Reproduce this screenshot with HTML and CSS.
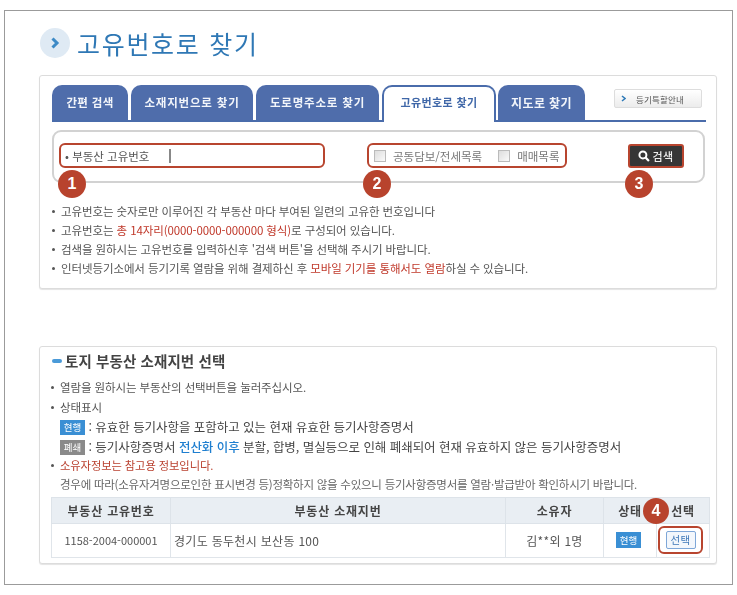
FILE: index.html
```html
<!DOCTYPE html>
<html lang="ko">
<head>
<meta charset="utf-8">
<title>고유번호로 찾기</title>
<link rel="stylesheet" href="styles.css">
</head>
<body>
<main class="frame">
  <header class="page-head">
    <span class="head-icon"><svg width="14" height="14" viewBox="0 0 14 14"><path d="M4.5 2.5 L9 7 L4.5 11.5" fill="none" stroke="#3d8ac6" stroke-width="3"/></svg></span>
    <h1 class="page-title">고유번호로 찾기</h1>
  </header>

  <section class="panel panel-search">
    <div class="tabs">
      <a class="tab tab-a">간편 검색</a>
      <a class="tab tab-b">소재지번으로 찾기</a>
      <a class="tab tab-c">도로명주소로 찾기</a>
      <a class="tab tab-d active">고유번호로 찾기</a>
      <a class="tab tab-e">지도로 찾기</a>
      <a class="guide"><svg width="5" height="7" viewBox="0 0 5 7"><path d="M1 1 L4 3.5 L1 6" fill="none" stroke="#2f7ab8" stroke-width="1.5"/></svg>등기특할안내</a>
    </div>
    <div class="search-box">
      <div class="mark mark-input">
        <span class="field-label">• 부동산 고유번호</span>
        <span class="caret"></span>
      </div>
      <div class="mark mark-checks">
        <span class="check"></span><span class="check-label">공동담보/전세목록</span>
        <span class="check check-2"></span><span class="check-label">매매목록</span>
      </div>
      <button class="search-btn"><svg width="12" height="12" viewBox="0 0 11 11"><circle cx="4.5" cy="4.5" r="3.2" fill="none" stroke="#fff" stroke-width="1.8"/><path d="M7 7 L10 10" stroke="#fff" stroke-width="2"/></svg>검색</button>
      <span class="num num-1">1</span>
      <span class="num num-2">2</span>
      <span class="num num-3">3</span>
    </div>
    <ul class="notes">
      <li>고유번호는 숫자로만 이루어진 각 부동산 마다 부여된 일련의 고유한 번호입니다</li>
      <li>고유번호는 <em class="red">총 14자리(0000-0000-000000 형식)</em>로 구성되어 있습니다.</li>
      <li>검색을 원하시는 고유번호를 입력하신후 '검색 버튼'을 선택해 주시기 바랍니다.</li>
      <li>인터넷등기소에서 등기기록 열람을 위해 결제하신 후 <em class="red">모바일 기기를 통해서도 열람</em>하실 수 있습니다.</li>
    </ul>
  </section>

  <section class="panel panel-result">
    <h2 class="result-title"><span class="dash"></span>토지 부동산 소재지번 선택</h2>
    <ul class="notes notes-result">
      <li>열람을 원하시는 부동산의 선택버튼을 눌러주십시오.</li>
      <li>상태표시</li>
      <li class="state"><span class="tag tag-blue">현행</span> : 유효한 등기사항을 포함하고 있는 현재 유효한 등기사항증명서</li>
      <li class="state"><span class="tag tag-gray">폐쇄</span> : 등기사항증명서 <em class="blue">전산화 이후</em> 분할, 합병, 멸실등으로 인해 폐쇄되어 현재 유효하지 않은 등기사항증명서</li>
      <li class="owner">소유자정보는 참고용 정보입니다.</li>
      <li class="plain">경우에 따라(소유자겨명으로인한 표시변경 등)정확하지 않을 수있으니 등기사항증명서를 열람·발급받아 확인하시기 바랍니다.</li>
    </ul>
    <table class="result-table">
      <colgroup><col class="c1"><col class="c2"><col class="c3"><col class="c4"><col class="c5"></colgroup>
      <thead>
        <tr><th>부동산 고유번호</th><th>부동산 소재지번</th><th>소유자</th><th>상태</th><th class="th-pick">선택<span class="num num-4">4</span></th></tr>
      </thead>
      <tbody>
        <tr>
          <td class="center cell-id">1158-2004-000001</td>
          <td>경기도 동두천시 보산동 100</td>
          <td class="center">김**외 1명</td>
          <td class="center"><span class="tag tag-blue tag-cell">현행</span></td>
          <td class="center"><span class="pick-mark"><span class="pick-btn">선택</span></span></td>
        </tr>
      </tbody>
    </table>
  </section>
</main>
</body>
</html>
```
FILE: styles.css
```css
* { box-sizing: border-box; }
html, body { margin: 0; background: #fff; }
body { font-family: "Noto Sans CJK KR", "Noto Sans", sans-serif; color: #555; }

.frame {
  width: 729px;
  height: 575px;
  margin: 10px 0 0 4px;
  padding: 17px 14px 0 34px;
  border: 1px solid #9b9b9b;
}
.frame > * { filter: blur(0.55px); }

.page-head { display: flex; align-items: center; gap: 7px; height: 30px; margin-left: 1px; }
.head-icon {
  width: 30px; height: 30px; border-radius: 50%;
  background: #dfeaf4;
  display: flex; align-items: center; justify-content: center;
}
.page-title { margin: 0; font-size: 25px; font-weight: 400; color: #2f78b5; letter-spacing: 1.7px; line-height: 30px; }

.panel { border: 1px solid #dcdcdc; border-radius: 3px; width: 678px; background: #fff; box-shadow: 0 1px 1px #e4e4e4; }
.panel-search { height: 214px; margin-top: 17px; padding: 9px 10px 0 12px; }
.panel-result { height: 218px; margin-top: 57px; padding: 4px 7px 0 11px; }

.tabs { display: flex; gap: 3px; height: 37px; width: 654px; border-bottom: 2px solid #4a6cab; position: relative; }
.tab {
  height: 35px; border-radius: 10px 10px 0 0; background: #4f6dab; color: #f2f5fa;
  font-size: 11.5px; font-weight: 700; text-align: center; line-height: 35px; letter-spacing: .8px; display: block;
}
.tab-a { width: 76px; letter-spacing: .3px; }
.tab-b { width: 122px; }
.tab-c { width: 123px; }
.tab-d { width: 114px; }
.tab-e { width: 87px; margin-left: -1px; font-size: 12px; letter-spacing: .4px; }
.tab.active {
  height: 37px; background: #fff; color: #3f67a8; border: 2px solid #4a6cab; border-bottom: 0;
  font-size: 11px; line-height: 31px; letter-spacing: .4px;
}
.guide {
  display: flex; align-items: center; gap: 10px;
  position: absolute; left: 562px; top: 4px; width: 88px; height: 19px; padding-left: 6px;
  border: 1px solid #ddd; border-radius: 2px; font-size: 8.5px; letter-spacing: .2px; color: #555;
  background: linear-gradient(#fff, #ececec);
}

.search-box {
  position: relative; display: flex; align-items: center;
  width: 653px; height: 53px; margin-top: 8px; padding: 0 0 2px 5px;
  border: 2px solid #d2d2d2; border-radius: 9px;
}
.mark { display: flex; align-items: center; height: 25px; border: 2.5px solid #b8452f; border-radius: 6px; }
.mark-input { width: 266px; padding-left: 4px; }
.field-label { font-size: 11.5px; color: #555; width: 104px; white-space: nowrap; }
.caret { width: 2px; height: 14px; background: #888; }
.mark-checks { width: 200px; margin-left: 42px; padding-left: 5px; }
.check { width: 12px; height: 12px; border: 1px solid #bbb; background: linear-gradient(135deg, #ddd, #fafafa); }
.check-2 { margin-left: 16px; }
.check-label { font-size: 11.5px; color: #777; margin-left: 7px; white-space: nowrap; }
.search-btn {
  display: flex; align-items: center; justify-content: center; gap: 2px;
  width: 56px; height: 24px; margin-left: 61px; padding: 0;
  background: #363636; color: #eee; border: 2px solid #b8452f; border-radius: 3px;
  font: 500 11px "Noto Sans CJK KR", sans-serif; letter-spacing: .5px;
}
.num {
  position: absolute; width: 28px; height: 28px; border-radius: 50%;
  background: #b8432d; color: #fff;
  font: 700 16px/28px "Liberation Sans", sans-serif; text-align: center; letter-spacing: 0;
}
.num-1 { left: 4px; top: 38px; }
.num-2 { left: 309px; top: 38px; }
.num-3 { left: 571px; top: 38px; }
.num-4 { left: -14px; top: 0; width: 26px; height: 26px; line-height: 26px; }

.notes { list-style: none; margin: 19px 0 0; padding: 0; font-size: 11.5px; line-height: 19px; letter-spacing: -.1px; }
.notes li { position: relative; padding-left: 9px; white-space: nowrap; color: #555; }
.notes li::before { content: ""; position: absolute; left: 0; top: 8px; width: 3px; height: 3px; border-radius: 50%; background: #555; }
.notes li.state::before, .notes li.plain::before { display: none; }
.red { font-style: normal; color: #c0392b; }
.blue { font-style: normal; color: #1f7fd0; font-weight: 500; }

.result-title { margin: 0; height: 20px; font-size: 14.5px; line-height: 20px; font-weight: 700; color: #444; display: flex; align-items: center; gap: 3px; letter-spacing: .1px; }
.dash { width: 10px; height: 4px; border-radius: 2px; background: #4a9ad8; margin-left: 1px; }
.notes-result { margin-top: 7px; }
.notes-result li { line-height: 19.5px; }
.notes li.state { font-size: 12.5px; color: #444; letter-spacing: -.05px; }
.notes li.owner { color: #b9402f; font-size: 11.3px; }
.notes li.plain { color: #666; letter-spacing: -.25px; line-height: 17px; }
.tag { display: inline-block; width: 25px; height: 15px; line-height: 15px; text-align: center; color: #fff; font-size: 9.5px; letter-spacing: 0; vertical-align: 1px; }
.tag-blue { background: #3a8fd4; }
.tag-gray { background: #8a8a8a; }
.tag-cell { height: 16px; line-height: 16px; margin-left: -3px; vertical-align: 2px; }

.result-table { border-collapse: collapse; table-layout: fixed; width: 658px; margin-top: 4px; font-size: 12px; color: #555; }
.c1 { width: 119px; } .c2 { width: 335px; } .c3 { width: 98px; } .c4 { width: 53px; } .c5 { width: 53px; }
.result-table th {
  height: 26px; padding: 0; background: #e9eef3; border: 1px solid #dde3e9;
  font-size: 12px; font-weight: 700; color: #444; letter-spacing: .8px;
}
.result-table td { height: 34px; padding: 0 3px; border: 1px solid #e0e5ea; letter-spacing: .3px; }
.result-table td.center { text-align: center; }
.result-table td.cell-id { font-size: 11px; letter-spacing: 0; }
.th-pick { position: relative; }
.pick-mark {
  display: inline-flex; align-items: center; justify-content: center;
  width: 45px; height: 28px; border: 2.5px solid #b8452f; border-radius: 6px; vertical-align: middle; margin-left: -5px;
}
.pick-btn {
  width: 30px; height: 18px; line-height: 16px; border: 1px solid #7ea7d8; border-radius: 2px;
  background: #f3f7fc; color: #3f78b8; font-size: 10.5px; text-align: center;
}
```
